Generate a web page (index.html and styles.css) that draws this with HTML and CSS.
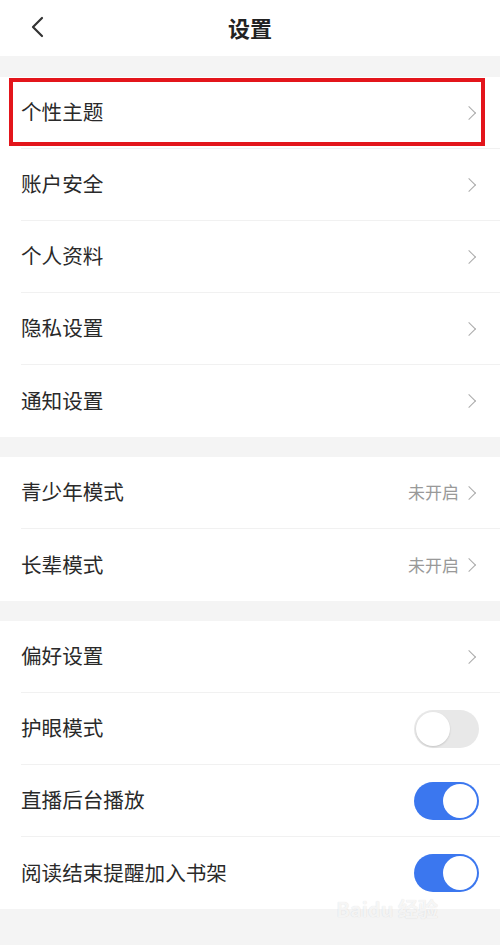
FILE: index.html
```html
<!DOCTYPE html>
<html lang="zh-CN">
<head>
    <meta charset="UTF-8">
    <meta name="viewport" content="width=device-width, initial-scale=1.0">
    <title>设置</title>
    <link rel="stylesheet" href="styles.css">
</head>
<body>
    <div class="topbar">
        <svg class="back" width="16" height="22" viewBox="0 0 16 22">
            <path d="M12 2 L3 11 L12 20" fill="none" stroke="#333" stroke-width="2.2" stroke-linecap="round" stroke-linejoin="round"/>
        </svg>
        <div class="title">设置</div>
    </div>

    <div class="group">
        <div class="row highlighted">
            <span class="label">个性主题</span>
            <span class="arrow"></span>
            <div class="mark"></div>
        </div>
        <div class="row"><span class="label">账户安全</span><span class="arrow"></span></div>
        <div class="row"><span class="label">个人资料</span><span class="arrow"></span></div>
        <div class="row"><span class="label">隐私设置</span><span class="arrow"></span></div>
        <div class="row"><span class="label">通知设置</span><span class="arrow"></span></div>
    </div>

    <div class="group">
        <div class="row"><span class="label">青少年模式</span><span class="value">未开启</span><span class="arrow"></span></div>
        <div class="row"><span class="label">长辈模式</span><span class="value">未开启</span><span class="arrow"></span></div>
    </div>

    <div class="group">
        <div class="row"><span class="label">偏好设置</span><span class="arrow"></span></div>
        <div class="row"><span class="label">护眼模式</span><span class="switch"></span></div>
        <div class="row"><span class="label">直播后台播放</span><span class="switch on"></span></div>
        <div class="row"><span class="label">阅读结束提醒加入书架</span><span class="switch on"></span></div>
    </div>

    <div class="watermark">Baidu 经验</div>
</body>
</html>
```

FILE: styles.css
```css
/* settings page */
body {
    margin: 0;
    background: #f4f4f4;
    font-family: "Noto Sans CJK SC", "Noto Sans", sans-serif;
    color: #2a2a2a;
    height: 945px;
    overflow: hidden;
    position: relative;
}
.topbar {
    height: 56px;
    background: #fff;
    display: flex;
    align-items: center;
    justify-content: center;
    position: relative;
    margin-bottom: 21px;
}
.back {
    position: absolute;
    left: 30px;
    top: 16px;
}
.title {
    font-size: 22px;
    font-weight: bold;
    color: #222;
    padding-bottom: 3px;
}
.group {
    background: #fff;
    margin-bottom: 20px;
}
.row {
    height: 72px;
    margin-left: 21px;
    padding-right: 22px;
    display: flex;
    align-items: center;
    border-bottom: 1px solid #f1f1f1;
    box-sizing: border-box;
    position: relative;
}
.row:last-child {
    border-bottom: none;
}
.label {
    flex: 1;
    font-size: 20.6px;
    padding-bottom: 3px;
}
.value {
    font-size: 17px;
    color: #999;
    margin-right: 5px;
    padding-bottom: 2px;
}
.arrow {
    width: 9px;
    height: 9px;
    border-top: 1.5px solid #aaa;
    border-right: 1.5px solid #aaa;
    transform: rotate(45deg);
    margin-right: 4px;
}
.mark {
    position: absolute;
    left: -12px;
    right: 15px;
    top: 1px;
    bottom: 2px;
    border: 4px solid #e3151b;
}
.switch {
    width: 65px;
    height: 38px;
    border-radius: 19px;
    background: #e8e8e8;
    position: relative;
    margin-right: -1px;
}
.switch::after {
    content: "";
    position: absolute;
    left: 2px;
    top: 2px;
    width: 34px;
    height: 34px;
    border-radius: 50%;
    background: #fff;
    box-shadow: 0 1px 2px rgba(0, 0, 0, 0.15);
}
.switch.on {
    background: #3b77ef;
}
.switch.on::after {
    left: auto;
    right: 2px;
    box-shadow: none;
}
.watermark {
    position: absolute;
    right: 62px;
    bottom: 22px;
    font-size: 20px;
    font-weight: bold;
    color: rgba(255, 255, 255, 0.75);
    text-shadow: 0 0 1px rgba(0, 0, 0, 0.15);
}
```
